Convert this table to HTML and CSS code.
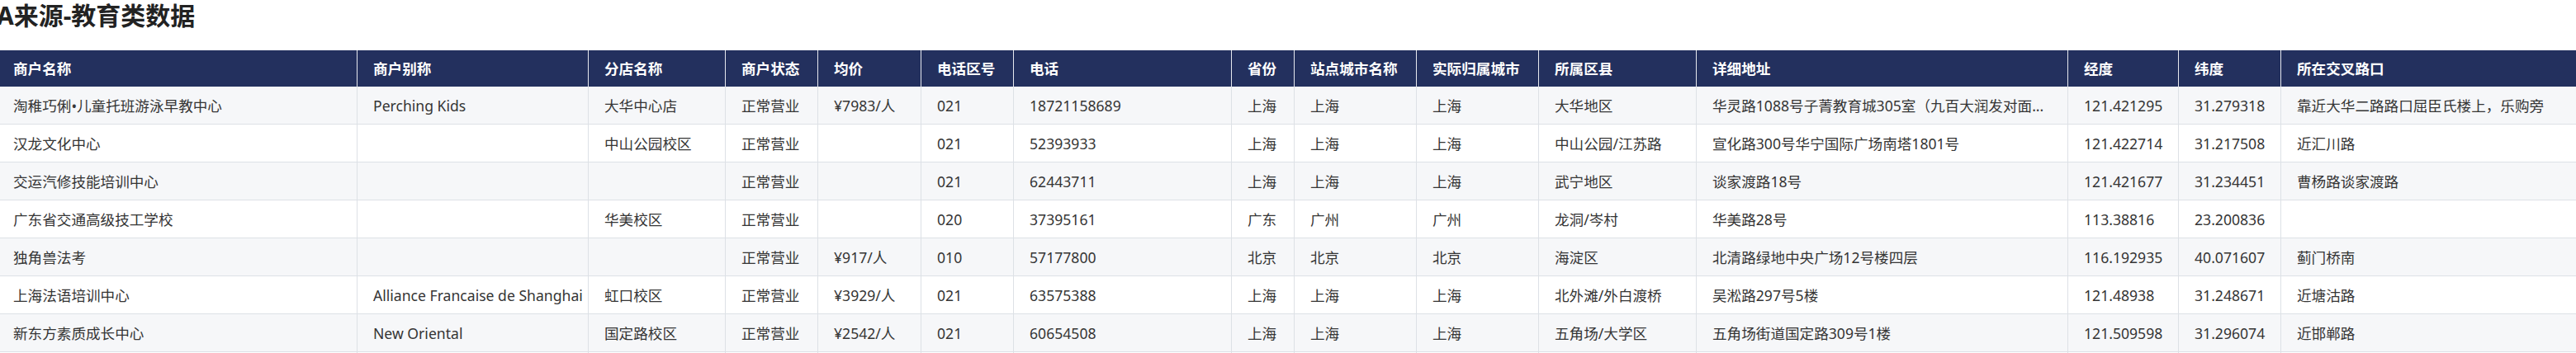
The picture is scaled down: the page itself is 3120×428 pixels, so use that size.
FILE: index.html
```html
<!DOCTYPE html>
<html lang="zh-CN">
<head>
<meta charset="utf-8">
<title>A来源-教育类数据</title>
<link rel="stylesheet" href="styles.css">
</head>
<body>
<div class="page">
  <h1 class="title">A来源-教育类数据</h1>
  <table class="data">
    <colgroup>
      <col class="c1"><col class="c2"><col class="c3"><col class="c4"><col class="c5">
      <col class="c6"><col class="c7"><col class="c8"><col class="c9"><col class="c10">
      <col class="c11"><col class="c12"><col class="c13"><col class="c14"><col class="c15">
    </colgroup>
    <thead>
      <tr>
        <th>商户名称</th><th>商户别称</th><th>分店名称</th><th>商户状态</th><th>均价</th>
        <th>电话区号</th><th>电话</th><th>省份</th><th>站点城市名称</th><th>实际归属城市</th>
        <th>所属区县</th><th>详细地址</th><th>经度</th><th>纬度</th><th>所在交叉路口</th>
      </tr>
    </thead>
    <tbody>
      <tr>
        <td>淘稚巧俐•儿童托班游泳早教中心</td><td>Perching Kids</td><td>大华中心店</td><td>正常营业</td><td>¥7983/人</td>
        <td>021</td><td>18721158689</td><td>上海</td><td>上海</td><td>上海</td>
        <td>大华地区</td><td>华灵路1088号子菁教育城305室（九百大润发对面...</td><td>121.421295</td><td>31.279318</td><td>靠近大华二路路口屈臣氏楼上，乐购旁</td>
      </tr>
      <tr>
        <td>汉龙文化中心</td><td></td><td>中山公园校区</td><td>正常营业</td><td></td>
        <td>021</td><td>52393933</td><td>上海</td><td>上海</td><td>上海</td>
        <td>中山公园/江苏路</td><td>宣化路300号华宁国际广场南塔1801号</td><td>121.422714</td><td>31.217508</td><td>近汇川路</td>
      </tr>
      <tr>
        <td>交运汽修技能培训中心</td><td></td><td></td><td>正常营业</td><td></td>
        <td>021</td><td>62443711</td><td>上海</td><td>上海</td><td>上海</td>
        <td>武宁地区</td><td>谈家渡路18号</td><td>121.421677</td><td>31.234451</td><td>曹杨路谈家渡路</td>
      </tr>
      <tr>
        <td>广东省交通高级技工学校</td><td></td><td>华美校区</td><td>正常营业</td><td></td>
        <td>020</td><td>37395161</td><td>广东</td><td>广州</td><td>广州</td>
        <td>龙洞/岑村</td><td>华美路28号</td><td>113.38816</td><td>23.200836</td><td></td>
      </tr>
      <tr>
        <td>独角兽法考</td><td></td><td></td><td>正常营业</td><td>¥917/人</td>
        <td>010</td><td>57177800</td><td>北京</td><td>北京</td><td>北京</td>
        <td>海淀区</td><td>北清路绿地中央广场12号楼四层</td><td>116.192935</td><td>40.071607</td><td>蓟门桥南</td>
      </tr>
      <tr>
        <td>上海法语培训中心</td><td>Alliance Francaise de Shanghai</td><td>虹口校区</td><td>正常营业</td><td>¥3929/人</td>
        <td>021</td><td>63575388</td><td>上海</td><td>上海</td><td>上海</td>
        <td>北外滩/外白渡桥</td><td>吴淞路297号5楼</td><td>121.48938</td><td>31.248671</td><td>近塘沽路</td>
      </tr>
      <tr>
        <td>新东方素质成长中心</td><td>New Oriental</td><td>国定路校区</td><td>正常营业</td><td>¥2542/人</td>
        <td>021</td><td>60654508</td><td>上海</td><td>上海</td><td>上海</td>
        <td>五角场/大学区</td><td>五角场街道国定路309号1楼</td><td>121.509598</td><td>31.296074</td><td>近邯郸路</td>
      </tr>
      <tr>
        <td>&nbsp;</td><td></td><td></td><td></td><td></td>
        <td></td><td></td><td></td><td></td><td></td>
        <td></td><td></td><td></td><td></td><td></td>
      </tr>
    </tbody>
  </table>
</div>
</body>
</html>
```

FILE: styles.css
```css
html, body {
  margin: 0;
  padding: 0;
  background: #ffffff;
}

body {
  font-family: "Noto Sans", "Noto Sans CJK SC", sans-serif;
  color: #333333;
  overflow: hidden;
}

.page {
  margin-left: -4px;
}

.title {
  margin: 0;
  font-size: 30px;
  line-height: 38px;
  font-weight: 700;
  color: #222222;
  font-family: "Noto Sans", "Noto Sans CJK SC", sans-serif;
  height: 38px;
}

.data {
  margin-top: 23px;
  border-collapse: collapse;
  table-layout: fixed;
  width: 3124px;
  font-size: 17.6px;
}

.c1 { width: 436px; }
.c2 { width: 280px; }
.c3 { width: 166px; }
.c4 { width: 112px; }
.c5 { width: 125px; }
.c6 { width: 112px; }
.c7 { width: 264px; }
.c8 { width: 76px; }
.c9 { width: 148px; }
.c10 { width: 148px; }
.c11 { width: 191px; }
.c12 { width: 450px; }
.c13 { width: 134px; }
.c14 { width: 124px; }
.c15 { width: 358px; }

.data th,
.data td {
  text-align: left;
  white-space: nowrap;
  overflow: hidden;
  padding: 0 0 0 19px;
  line-height: 24px;
}

.data th {
  height: 44px;
  background: #23305e;
  color: #ffffff;
  font-weight: 700;
  border-left: 1px solid #e6e8ee;
  border-right: 1px solid #e6e8ee;
  box-sizing: border-box;
}

.data td {
  height: 45px;
  border: 1px solid #dde1e6;
  border-top: none;
  color: #353535;
}

.data tbody tr:nth-child(odd) td {
  background: #f6f7f9;
}

.data tbody tr:nth-child(even) td {
  background: #ffffff;
}
```
